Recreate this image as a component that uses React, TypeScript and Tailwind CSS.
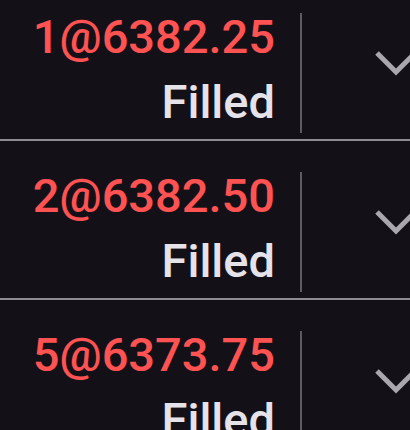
import React from 'react';

interface Fill {
  qty: number;
  price: string;
  status: string;
}

const fills: Fill[] = [
  { qty: 1, price: '6382.25', status: 'Filled' },
  { qty: 2, price: '6382.50', status: 'Filled' },
  { qty: 5, price: '6373.75', status: 'Filled' },
];

function Chevron() {
  return (
    <svg width="46" height="30" viewBox="0 0 46 30" className="mt-[67px] shrink-0" fill="none">
      <polyline points="4,4 23,23 42,4" stroke="#a9a7ad" strokeWidth="5" strokeLinejoin="miter" />
    </svg>
  );
}

function FillRow({ fill }: { fill: Fill }) {
  return (
    <div className="flex h-[159px] shrink-0 border-b-2 border-[#8e8c92]">
      <div className="w-[275px] shrink-0 pt-[22px] text-right text-[47px] font-medium leading-[65px]">
        <div className="text-[#ff5252]">
          {fill.qty}@{fill.price}
        </div>
        <div className="text-[#e6e2ea]">{fill.status}</div>
      </div>
      <div className="ml-[25px] mt-[31px] h-[120px] w-[2px] shrink-0 bg-[#5e5c63]" />
      <div className="flex w-[188px] shrink-0 justify-center">
        <Chevron />
      </div>
    </div>
  );
}

export default function App() {
  return (
    <div
      className="h-[430px] w-[410px] overflow-hidden bg-[#131117]"
      style={{ fontFamily: 'Roboto, "Noto Sans", sans-serif' }}
    >
      <div className="-mt-[18px] flex flex-col">
        {fills.map((f) => (
          <FillRow key={f.price} fill={f} />
        ))}
      </div>
    </div>
  );
}
